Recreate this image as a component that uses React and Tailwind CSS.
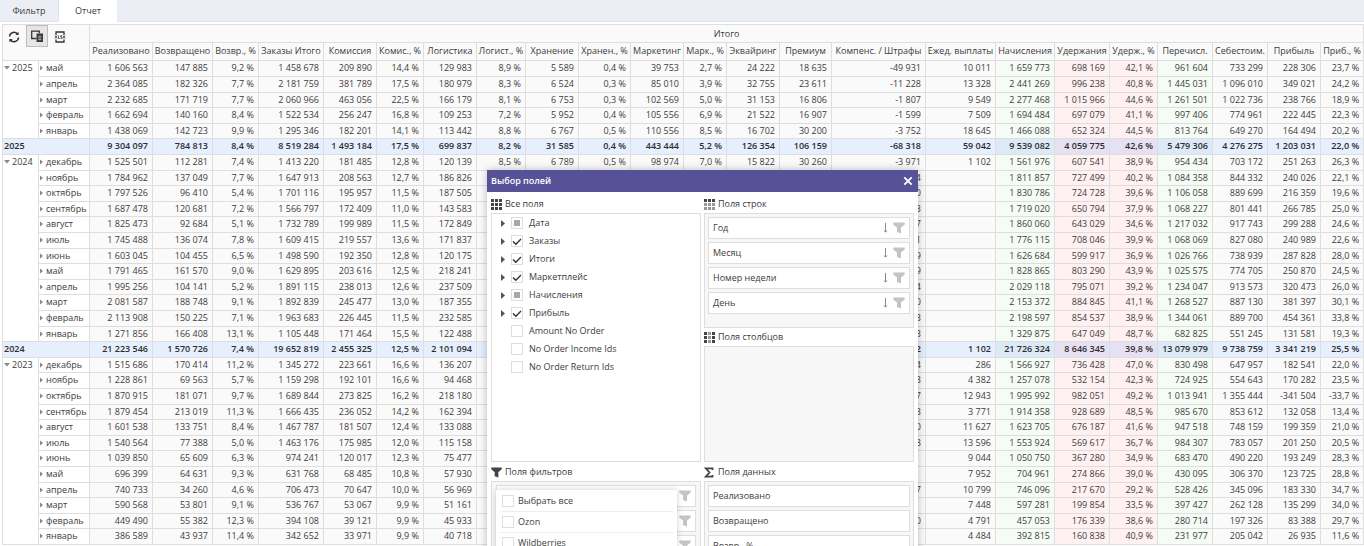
import React from 'react';

const columns = [
  { title: 'Реализовано', width: 'w-[63px]' },
  { title: 'Возвращено', width: 'w-[60px]' },
  { title: 'Возвр., %', width: 'w-[46px]' },
  { title: 'Заказы Итого', width: 'w-[65px]' },
  { title: 'Комиссия', width: 'w-[53px]' },
  { title: 'Комис., %', width: 'w-[47px]' },
  { title: 'Логистика', width: 'w-[53px]' },
  { title: 'Логист., %', width: 'w-[49px]' },
  { title: 'Хранение', width: 'w-[53px]' },
  { title: 'Хранен., %', width: 'w-[52px]' },
  { title: 'Маркетинг', width: 'w-[53px]' },
  { title: 'Марк., %', width: 'w-[43px]' },
  { title: 'Эквайринг', width: 'w-[53px]' },
  { title: 'Премиум', width: 'w-[52px]' },
  { title: 'Компенс. / Штрафы', width: 'w-[94px]' },
  { title: 'Ежед. выплаты', width: 'w-[70px]' },
  { title: 'Начисления', width: 'w-[59px]', tone: 'green' },
  { title: 'Удержания', width: 'w-[55px]', tone: 'red' },
  { title: 'Удерж., %', width: 'w-[48px]', tone: 'red' },
  { title: 'Перечисл.', width: 'w-[55px]', tone: 'green' },
  { title: 'Себестоим.', width: 'w-[55px]' },
  { title: 'Прибыль', width: 'w-[53px]' },
  { title: 'Приб., %', width: 'w-[43px]' },
];

// label | one value per column, separated by ";"
const years = [
  {
    year: '2025',
    months: [
      'май|1 606 563;147 885;9,2 %;1 458 678;209 890;14,4 %;129 983;8,9 %;5 589;0,4 %;39 753;2,7 %;24 222;18 635;-49 931;10 011;1 659 773;698 169;42,1 %;961 604;733 299;228 306;23,7 %',
      'апрель|2 364 085;182 326;7,7 %;2 181 759;381 789;17,5 %;180 979;8,3 %;6 524;0,3 %;85 010;3,9 %;32 755;23 611;-11 228;13 328;2 441 269;996 238;40,8 %;1 445 031;1 096 010;349 021;24,2 %',
      'март|2 232 685;171 719;7,7 %;2 060 966;463 056;22,5 %;166 179;8,1 %;6 753;0,3 %;102 569;5,0 %;31 153;16 806;-1 807;9 549;2 277 468;1 015 966;44,6 %;1 261 501;1 022 736;238 766;18,9 %',
      'февраль|1 662 694;140 160;8,4 %;1 522 534;256 247;16,8 %;109 253;7,2 %;5 952;0,4 %;105 556;6,9 %;21 522;16 907;-1 599;7 509;1 694 484;697 079;41,1 %;997 406;774 961;222 445;22,3 %',
      'январь|1 438 069;142 723;9,9 %;1 295 346;182 201;14,1 %;113 442;8,8 %;6 767;0,5 %;110 556;8,5 %;16 702;30 200;-3 752;18 645;1 466 088;652 324;44,5 %;813 764;649 270;164 494;20,2 %',
    ],
    total: '2025|9 304 097;784 813;8,4 %;8 519 284;1 493 184;17,5 %;699 837;8,2 %;31 585;0,4 %;443 444;5,2 %;126 354;106 159;-68 318;59 042;9 539 082;4 059 775;42,6 %;5 479 306;4 276 275;1 203 031;22,0 %',
  },
  {
    year: '2024',
    months: [
      'декабрь|1 525 501;112 281;7,4 %;1 413 220;181 485;12,8 %;120 139;8,5 %;6 789;0,5 %;98 974;7,0 %;15 822;30 260;-3 971;1 102;1 561 976;607 541;38,9 %;954 434;703 172;251 263;26,3 %',
      'ноябрь|1 784 962;137 049;7,7 %;1 647 913;208 563;12,7 %;186 826;;;;;;;;4;;1 811 857;727 499;40,2 %;1 084 358;844 332;240 026;22,1 %',
      'октябрь|1 797 526;96 410;5,4 %;1 701 116;195 957;11,5 %;187 505;;;;;;;;0;;1 830 786;724 728;39,6 %;1 106 058;889 699;216 359;19,6 %',
      'сентябрь|1 687 478;120 681;7,2 %;1 566 797;172 409;11,0 %;143 583;;;;;;;;3;;1 719 020;650 794;37,9 %;1 068 227;801 441;266 785;25,0 %',
      'август|1 825 473;92 684;5,1 %;1 732 789;199 989;11,5 %;172 849;;;;;;;;7;;1 860 060;643 029;34,6 %;1 217 032;917 743;299 288;24,6 %',
      'июль|1 745 488;136 074;7,8 %;1 609 415;219 557;13,6 %;171 837;;;;;;;;1;;1 776 115;708 046;39,9 %;1 068 069;827 080;240 989;22,6 %',
      'июнь|1 603 045;104 455;6,5 %;1 498 590;192 350;12,8 %;120 175;;;;;;;;9;;1 626 684;599 917;36,9 %;1 026 766;738 939;287 828;28,0 %',
      'май|1 791 465;161 570;9,0 %;1 629 895;203 616;12,5 %;218 241;;;;;;;;9;;1 828 865;803 290;43,9 %;1 025 575;774 705;250 870;24,5 %',
      'апрель|1 995 256;104 141;5,2 %;1 891 115;238 013;12,6 %;237 509;;;;;;;;4;;2 029 118;795 071;39,2 %;1 234 047;913 573;320 473;26,0 %',
      'март|2 081 587;188 748;9,1 %;1 892 839;245 477;13,0 %;187 355;;;;;;;;0;;2 153 372;884 845;41,1 %;1 268 527;887 130;381 397;30,1 %',
      'февраль|2 113 908;150 225;7,1 %;1 963 683;226 445;11,5 %;232 585;;;;;;;;3;;2 198 597;854 537;38,9 %;1 344 061;889 700;454 361;33,8 %',
      'январь|1 271 856;166 408;13,1 %;1 105 448;171 464;15,5 %;122 488;;;;;;;;3;;1 329 875;647 049;48,7 %;682 825;551 245;131 581;19,3 %',
    ],
    total: '2024|21 223 546;1 570 726;7,4 %;19 652 819;2 455 325;12,5 %;2 101 094;;;;;;;;2;1 102;21 726 324;8 646 345;39,8 %;13 079 979;9 738 759;3 341 219;25,5 %',
  },
  {
    year: '2023',
    months: [
      'декабрь|1 515 686;170 414;11,2 %;1 345 272;223 661;16,6 %;136 207;;;;;;;;4;286;1 566 927;736 428;47,0 %;830 498;647 957;182 541;22,0 %',
      'ноябрь|1 228 861;69 563;5,7 %;1 159 298;192 101;16,6 %;94 468;;;;;;;;3;4 382;1 257 078;532 154;42,3 %;724 925;554 643;170 282;23,5 %',
      'октябрь|1 870 915;181 071;9,7 %;1 689 844;273 825;16,2 %;218 180;;;;;;;;7;12 943;1 995 992;982 051;49,2 %;1 013 941;1 355 444;-341 504;-33,7 %',
      'сентябрь|1 879 454;213 019;11,3 %;1 666 435;236 052;14,2 %;162 394;;;;;;;;3;3 771;1 914 358;928 689;48,5 %;985 670;853 612;132 058;13,4 %',
      'август|1 601 538;133 751;8,4 %;1 467 787;181 507;12,4 %;133 088;;;;;;;;0;11 627;1 623 705;676 187;41,6 %;947 518;748 159;199 359;21,0 %',
      'июль|1 540 564;77 388;5,0 %;1 463 176;175 985;12,0 %;115 158;;;;;;;;8;13 596;1 553 924;569 617;36,7 %;984 307;783 057;201 250;20,5 %',
      'июнь|1 039 850;65 609;6,3 %;974 241;120 017;12,3 %;75 477;;;;;;;;;9 044;1 050 750;367 280;34,9 %;683 470;490 220;193 249;28,3 %',
      'май|696 399;64 631;9,3 %;631 768;68 485;10,8 %;57 930;;;;;;;;;7 952;704 961;274 866;39,0 %;430 095;306 370;123 725;28,8 %',
      'апрель|740 733;34 260;4,6 %;706 473;70 647;10,0 %;56 969;;;;;;;;7;10 799;746 096;217 670;29,2 %;528 426;345 096;183 330;34,7 %',
      'март|590 568;53 801;9,1 %;536 767;53 067;9,9 %;51 161;;;;;;;;;7 448;597 281;199 854;33,5 %;397 427;262 128;135 299;34,0 %',
      'февраль|449 490;55 382;12,3 %;394 108;39 121;9,9 %;45 933;;;;;;;;0;4 791;457 053;176 339;38,6 %;280 714;197 326;83 388;29,7 %',
      'январь|386 589;43 937;11,4 %;342 652;33 971;9,9 %;40 718;;;;;;;;;4 484;392 815;160 838;40,9 %;231 977;205 042;26 935;11,6 %',
    ],
  },
];

const rows = years.flatMap(({ year, months, total }) => {
  const list = months.map((line, i) => ({ line, year: i === 0 ? year : null, span: months.length }));
  return total ? [...list, { line: total, isTotal: true }] : list;
});

const fields = [
  { name: 'Дата', state: 'partial', group: true },
  { name: 'Заказы', state: 'on', group: true },
  { name: 'Итоги', state: 'on', group: true },
  { name: 'Маркетплейс', state: 'on', group: true },
  { name: 'Начисления', state: 'partial', group: true },
  { name: 'Прибыль', state: 'on', group: true },
  { name: 'Amount No Order' },
  { name: 'No Order Income Ids' },
  { name: 'No Order Return Ids' },
];

function cellColor(tone, isTotal) {
  if (tone === 'green') return isTotal ? 'bg-[#dbeaf6]' : 'bg-[#f5fcf5]';
  if (tone === 'red') return isTotal ? 'bg-[#e6e1f2]' : 'bg-[#fff1f1]';
  return isTotal ? 'bg-[#e5effe]' : 'bg-[#fafafa]';
}

function FunnelIcon({ className }) {
  return (
    <svg viewBox="0 0 12 12" className={className} fill="currentColor" aria-hidden="true">
      <path d="M0.3 0.5h11.4v2L8 5.6v5.9l-4-1.4V5.6L0.3 2.5z" />
    </svg>
  );
}

function GridIcon({ variant }) {
  return (
    <svg viewBox="0 0 11 11" className="size-[11px] shrink-0" fill="#444" aria-hidden="true">
      {[0, 1, 2].map((r) =>
        [0, 1, 2].map((c) => {
          const faded = (variant === 'rows' && r > 0) || (variant === 'columns' && c === 1);
          return <rect key={`${r}${c}`} x={c * 4} y={r * 4} width="3" height="3" opacity={faded ? 0.55 : 1} />;
        })
      )}
    </svg>
  );
}

function Checkbox({ id, state }) {
  return (
    <span className="relative flex size-3 shrink-0">
      <input
        id={id}
        type="checkbox"
        defaultChecked={state === 'on'}
        ref={(el) => {
          if (el) el.indeterminate = state === 'partial';
        }}
        className="peer size-3 appearance-none border border-[#dedede] bg-white"
      />
      <svg viewBox="0 0 12 12" className="pointer-events-none absolute inset-0 hidden peer-checked:block" fill="none" stroke="#333" strokeWidth="1.4">
        <path d="M2 6.4L4.8 9.2L10 4" />
      </svg>
      <span className="pointer-events-none absolute inset-[3px] hidden bg-[#a8a8a8] peer-indeterminate:block" />
    </span>
  );
}

function FieldItem({ name, sort, filter }) {
  return (
    <div className="flex h-[22px] items-center border border-[#dedede] bg-white px-1">
      <span className="flex-1">{name}</span>
      {sort && (
        <button type="button" aria-label="Сортировка" className="mr-1">
          <svg viewBox="0 0 7 10" className="h-[10px] w-[7px]" fill="none" stroke="#8a8a8a">
            <path d="M3.5 0v9M2 7.5l1.5 1.7l1.5-1.7" />
          </svg>
        </button>
      )}
      {filter && (
        <button type="button" aria-label="Фильтр" className="text-[#c4c4c4]">
          <FunnelIcon className="size-3" />
        </button>
      )}
    </div>
  );
}

function AreaTitle({ icon, children }) {
  return (
    <h3 className="flex h-[18px] items-center gap-[3px]">
      {icon}
      {children}
    </h3>
  );
}

function FieldChooser() {
  return (
    <section className="absolute top-[170px] left-[487px] w-[431px] bg-white text-[9px] leading-3 shadow-[0_0_8px_rgba(0,0,0,0.25)]">
      <header className="flex h-[22px] items-center justify-between bg-[#575198] px-1 text-white">
        <h2 className="font-semibold">Выбор полей</h2>
        <button type="button" aria-label="Закрыть" className="p-px">
          <svg viewBox="0 0 10 10" className="size-[10px]" fill="none" stroke="currentColor" strokeWidth="1.9">
            <path d="M1.3 1.3l7.4 7.4M8.7 1.3l-7.4 7.4" />
          </svg>
        </button>
      </header>

      <div className="grid grid-cols-2 gap-x-[3px] gap-y-px px-1 pt-[3px]">
        <div className="flex flex-col">
          <AreaTitle icon={<GridIcon />}>Все поля</AreaTitle>
          <ul className="flex-1 border border-[#dedede] bg-white">
            {fields.map((f, i) => (
              <li key={f.name} className="flex h-[18px] items-center pl-[9px]">
                <span className="w-[10px]">
                  {f.group && (
                    <svg viewBox="0 0 4 7" className="h-[7px] w-1" fill="#555" aria-hidden="true">
                      <path d="M0 0l4 3.5l-4 3.5z" />
                    </svg>
                  )}
                </span>
                <Checkbox id={`field-${i}`} state={f.state} />
                <label htmlFor={`field-${i}`} className="pl-1.5">{f.name}</label>
              </li>
            ))}
          </ul>
        </div>

        <div>
          <AreaTitle icon={<GridIcon variant="rows" />}>Поля строк</AreaTitle>
          <div className="flex h-[115px] flex-col gap-[3px] border border-[#dedede] bg-[#f7f7f7] p-[3px]">
            {['Год', 'Месяц', 'Номер недели', 'День'].map((name) => (
              <FieldItem key={name} name={name} sort filter />
            ))}
          </div>
          <AreaTitle icon={<GridIcon variant="columns" />}>Поля столбцов</AreaTitle>
          <div className="h-[116px] border border-[#dedede] bg-[#f7f7f7]" />
        </div>

        <div>
          <AreaTitle icon={<FunnelIcon className="size-[11px] text-[#444]" />}>Поля фильтров</AreaTitle>
          <div className="relative flex flex-col gap-[3px] border border-[#dedede] bg-[#f7f7f7] px-1 py-[3px]">
            <FieldItem filter />
            <FieldItem filter />
            <FieldItem filter />
            <ul className="absolute top-2 left-1 w-[181px] bg-white px-1 pt-px shadow-[0_0_6px_rgba(0,0,0,0.2)]">
              {['Выбрать все', 'Ozon', 'Wildberries'].map((name, i) => (
                <li key={name} className="flex h-[21px] items-center border-b border-[#eee] pl-0.5">
                  <Checkbox id={`market-${i}`} />
                  <label htmlFor={`market-${i}`} className="pl-1">{name}</label>
                </li>
              ))}
            </ul>
          </div>
        </div>

        <div>
          <AreaTitle
            icon={
              <svg viewBox="0 0 11 11" className="size-[11px]" fill="none" stroke="#444" strokeWidth="1.8" aria-hidden="true">
                <path d="M8.5 3V1.4H1.8L5.5 5.5L1.8 9.6h6.7V8" />
              </svg>
            }
          >
            Поля данных
          </AreaTitle>
          <div className="flex flex-col gap-[3px] border border-[#dedede] bg-[#f7f7f7] p-[3px]">
            {['Реализовано', 'Возвращено', 'Возвр., %'].map((name) => (
              <FieldItem key={name} name={name} />
            ))}
          </div>
        </div>
      </div>
    </section>
  );
}

function Toolbar() {
  return (
    <div className="flex h-[35px] items-start gap-[3px] pl-0.5 text-[#333]">
      <button type="button" aria-label="Обновить" className="flex h-6 w-[18px] items-center justify-center">
        <svg viewBox="0 0 12 12" className="size-3" fill="none" stroke="currentColor" strokeWidth="1.5">
          <path d="M1.5 5.5A4.5 4.5 0 0 1 9.8 3.4M10.5 6.5A4.5 4.5 0 0 1 2.2 8.6" />
          <path d="M10.6 0.8v3.2H7.4zM1.4 11.2V8h3.2z" fill="currentColor" stroke="none" />
        </svg>
      </button>
      <button type="button" aria-label="Выбор полей" className="flex h-[22px] w-[22px] items-center justify-center border border-[#bdbdbd] bg-[#e6e6e6]">
        <svg viewBox="0 0 12 12" className="size-3" fill="none" stroke="currentColor" strokeWidth="1.3">
          <path d="M5.5 8.5H0.7V1.2h7.6v2" />
          <path d="M6.2 4.2h5.1v7.1H6.2z" fill="currentColor" />
          <path d="M7.2 6.3h3.2M7.2 8h3.2M7.2 9.7h3.2" stroke="#e6e6e6" strokeWidth="0.7" />
        </svg>
      </button>
      <button type="button" aria-label="Экспорт" className="flex h-6 w-[18px] items-center justify-center">
        <svg viewBox="0 0 12 12" className="size-3" fill="none" stroke="currentColor">
          <path d="M2 4V1h8v3M2 8.5V11h8V8.5" strokeWidth="1.3" />
          <path d="M1 4.5l2 3M3 4.5l-2 3M4.5 4.5v3h1.2M8 4.7H6.7V6H8v1.4H6.6M9 4.5l2 3M11 4.5l-2 3" strokeWidth="0.8" />
        </svg>
      </button>
    </div>
  );
}

function ReportTable() {
  return (
    <table className="w-full table-fixed border-separate border-spacing-0 border-t border-l border-[#dedede] text-[9px] leading-3">
      <colgroup>
        <col className="w-9" />
        <col className="w-[51px]" />
        {columns.map((c) => (
          <col key={c.title} className={c.width} />
        ))}
      </colgroup>
      <thead className="bg-[#fafafa]">
        <tr>
          <td colSpan={2} rowSpan={2} className="border-r border-b border-[#dedede] p-0 align-top">
            <Toolbar />
          </td>
          <th colSpan={columns.length} className="h-[18px] border-r border-b border-[#dedede] p-0 font-normal">
            Итого
          </th>
        </tr>
        <tr>
          {columns.map((c) => (
            <th key={c.title} className="h-[18px] border-r border-b border-[#dedede] p-0 pb-px font-normal whitespace-nowrap">
              {c.title}
            </th>
          ))}
        </tr>
      </thead>
      <tbody>
        {rows.map(({ line, year, span, isTotal }, i) => {
          const [label, values] = line.split('|');
          return (
            <tr key={i} className={i % 5 === 2 || i % 5 === 4 ? 'h-[15px]' : 'h-4'}>
              {year && (
                <th rowSpan={span} className="border-r border-b border-[#dedede] bg-white p-0 align-top font-normal">
                  <button type="button" className="flex items-center gap-0.5 pt-px pl-px">
                    <svg viewBox="0 0 6 4" className="h-1 w-1.5" fill="#888">
                      <path d="M0 0h6L3 3.5z" />
                    </svg>
                    {year}
                  </button>
                </th>
              )}
              {isTotal ? (
                <th colSpan={2} className="border-r border-b border-[#dedede] bg-[#e5effe] p-0 pb-px pl-px text-left font-semibold text-[#2e2e2e]">
                  {label}
                </th>
              ) : (
                <th className="border-r border-b border-[#dedede] bg-white p-0 pb-px font-normal">
                  <button type="button" className="flex items-center gap-0.5 pl-px">
                    <svg viewBox="0 0 4 6" className="h-1.5 w-1" fill="#888">
                      <path d="M0 0.5l3 2.5L0 5.5z" />
                    </svg>
                    {label}
                  </button>
                </th>
              )}
              {values.split(';').map((value, c) => (
                <td
                  key={c}
                  className={`border-r border-b border-[#dedede] p-0 pr-1 pb-px text-right whitespace-nowrap ${cellColor(columns[c].tone, isTotal)} ${isTotal ? 'font-semibold text-[#2e2e2e]' : ''}`}
                >
                  {value}
                </td>
              ))}
            </tr>
          );
        })}
      </tbody>
    </table>
  );
}

export default function App() {
  return (
    <div className="relative min-h-screen overflow-hidden bg-white font-['Open_Sans','Noto_Sans',sans-serif] text-[#3c3c3c]">
      <nav className="flex h-[22px] border-b border-[#e3e6ea] bg-[#ebeef4] text-[9px] leading-3">
        <button type="button" className="w-[59px] border-r border-[#dfe2e8]">Фильтр</button>
        <button type="button" className="-mb-px w-[58px] bg-white">Отчет</button>
      </nav>
      <main className="pt-0.5 pl-0.5">
        <ReportTable />
      </main>
      <FieldChooser />
    </div>
  );
}
